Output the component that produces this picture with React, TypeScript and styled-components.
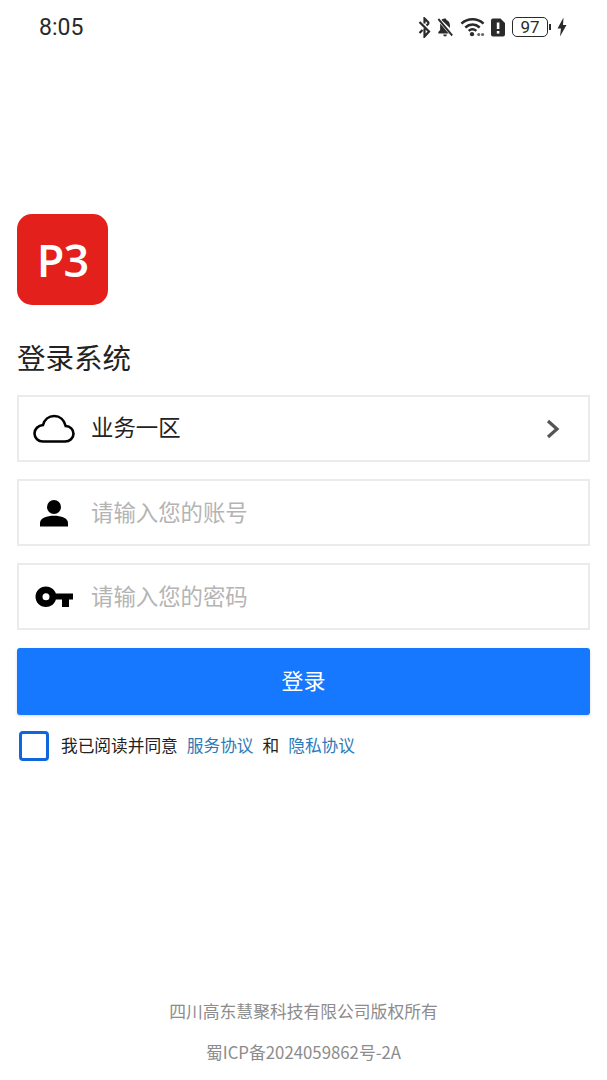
import styled, { createGlobalStyle } from 'styled-components'

const GlobalStyle = createGlobalStyle`
  html, body {
    margin: 0;
    padding: 0;
    background: #fff;
  }
  * {
    box-sizing: border-box;
  }
`

const BluetoothOffIcon = () => (
  <svg width="13" height="21" viewBox="0 0 13 21" fill="none" stroke="#2a2a2a" strokeWidth="2.2">
    <path d="M1.500 5 11 14.500l-4.500 5V11.500M11 6 8.500 8.500M6.500 6.500V1.500L11 6M1.500 16l3-3" />
  </svg>
)

const BellOffIcon = () => (
  <svg width="17" height="21" viewBox="0 0 19 21" fill="#2a2a2a" preserveAspectRatio="none">
    <path d="M9 1.500c.9 0 1.500.6 1.500 1.400 2.600.7 4 2.900 4 5.600v2.600L5 2.900c.8-.6 1.500-1 2.600-1.100C7.600 1.500 8.100 1.500 9 1.500zM3.500 6.500l9.500 10H1.500v-1.600l2-2V8.500c0-.7 0-1.400 0-2zM7 17.500h4c0 1.200-.9 2-2 2s-2-.8-2-2z" />
    <path d="M1.500 2 17 18.500" stroke="#2a2a2a" strokeWidth="2" fill="none" />
  </svg>
)

const WifiIcon = () => (
  <svg width="25" height="20" viewBox="0 0 26 20" fill="none" stroke="#2a2a2a" strokeWidth="2.600">
    <path d="M1.500 6.500C8 .5 18 .5 24.500 6.500M5.500 10.500c4.500-4 10.500-4 15 0M9 14c2.400-2 5.600-2 8 0" />
    <circle cx="12.500" cy="17.500" r="2.200" fill="#2a2a2a" stroke="none" />
    <circle cx="19.500" cy="17.800" r="1.600" fill="#666" stroke="none" />
    <circle cx="23.500" cy="17.800" r="1.600" fill="#666" stroke="none" />
  </svg>
)

const SimAlertIcon = () => (
  <svg width="14" height="19" viewBox="0 0 14 19">
    <path d="M3 .5h6.500L14 5v11.500a2 2 0 0 1-2 2H2a2 2 0 0 1-2-2v-14a2 2 0 0 1 2-2z" fill="#2a2a2a" />
    <rect x="5.800" y="4.500" width="2.600" height="6.500" fill="#fff" />
    <rect x="5.800" y="13" width="2.600" height="2.600" fill="#fff" />
  </svg>
)

const BoltIcon = () => (
  <svg width="10" height="20" viewBox="0 0 10 19" fill="#2a2a2a">
    <path d="M6.500 0 .5 11h3.500L3 19l6.500-11.500H6z" />
  </svg>
)

const CloudIcon = () => (
  <svg width="42" height="30" viewBox="0 0 42 30" fill="none" stroke="#000" strokeWidth="2.600">
    <path d="M10 27.500h22c4.800 0 8.500-3.400 8.500-7.800 0-4.300-3.300-7.500-7.800-7.700C31.200 6 26.700 2 21.200 2c-5.400 0-9.800 3.700-11.200 9C5 11.400 1.500 15 1.500 19.500c0 4.500 3.700 8 8.500 8z" />
  </svg>
)

const PersonIcon = () => (
  <svg width="28" height="28" viewBox="0 0 28 28" fill="#000">
    <circle cx="14" cy="8" r="7" />
    <path d="M0 27.500v-3.300C0 19 7 16.800 14 16.800s14 2.200 14 7.400v3.300z" />
  </svg>
)

const KeyIcon = () => (
  <svg width="38" height="22" viewBox="0 0 38 22" fill="#000">
    <path
      fillRule="evenodd"
      d="M11 .500c4.600 0 8.500 2.900 9.900 7H38v6h-4v7.500h-7v-7.500h-6.100c-1.400 4.600-5.300 7.500-9.900 7.500C5 21 .500 16.400.500 10.800.500 5.100 5 .500 11 .500zm0 6.800a3.500 3.500 0 1 0 0 7 3.500 3.500 0 0 0 0-7z"
    />
  </svg>
)

const ChevronIcon = () => (
  <svg width="14" height="20" viewBox="0 0 14 20" fill="none" stroke="#555" strokeWidth="3.200">
    <path d="M2 2l9 8-9 8" />
  </svg>
)

export default function App() {
  return (
    <Page>
      <GlobalStyle />
      <StatusBar>
        <Clock>8:05</Clock>
        <StatusIcons>
          <BluetoothOffIcon />
          <BellOffIcon />
          <WifiIcon />
          <SimAlertIcon />
          <Battery>
            <BatteryBody>97</BatteryBody>
            <BatteryCap />
          </Battery>
          <BoltIcon />
        </StatusIcons>
      </StatusBar>

      <Main>
        <Logo>P3</Logo>
        <Title>登录系统</Title>
        <Field>
          <IconSlot>
            <CloudIcon />
          </IconSlot>
          <FieldValue>业务一区</FieldValue>
          <ChevronIcon />
        </Field>
        <Field>
          <IconSlot>
            <PersonIcon />
          </IconSlot>
          <Placeholder>请输入您的账号</Placeholder>
        </Field>
        <Field>
          <IconSlot>
            <KeyIcon />
          </IconSlot>
          <Placeholder>请输入您的密码</Placeholder>
        </Field>
        <LoginButton>登录</LoginButton>
        <Agreement>
          <Checkbox />
          <AgreementText>我已阅读并同意</AgreementText>
          <AgreementLink>服务协议</AgreementLink>
          <AgreementText>和</AgreementText>
          <AgreementLink>隐私协议</AgreementLink>
        </Agreement>
      </Main>

      <Footer>
        <FooterLine>四川高东慧聚科技有限公司版权所有</FooterLine>
        <FooterLine>蜀ICP备2024059862号-2A</FooterLine>
      </Footer>
    </Page>
  )
}

const fontStack = `"Noto Sans CJK SC", "Noto Sans", "Liberation Sans", sans-serif`

const Page = styled.div`
  display: flex;
  flex-direction: column;
  width: 607px;
  height: 1080px;
  overflow: hidden;
  background: #fff;
  font-family: ${fontStack};
`

const StatusBar = styled.div`
  display: flex;
  align-items: center;
  justify-content: space-between;
  height: 54px;
  padding: 0 40px 0 39px;
  flex: none;
`

const Clock = styled.span`
  font-family: Roboto, sans-serif;
  font-size: 23px;
  color: #2a2a2a;
`

const StatusIcons = styled.div`
  display: flex;
  align-items: center;
  gap: 6px;
`

const Battery = styled.div`
  display: flex;
  align-items: center;
  gap: 1px;
  margin-left: 1px;
`

const BatteryBody = styled.div`
  display: flex;
  align-items: center;
  justify-content: center;
  width: 36px;
  height: 20px;
  border: 1.5px solid #2a2a2a;
  border-radius: 5px;
  font-family: Roboto, sans-serif;
  font-size: 17px;
  color: #2a2a2a;
`

const BatteryCap = styled.div`
  width: 2px;
  height: 6px;
  background: #2a2a2a;
`

const Main = styled.main`
  display: flex;
  flex-direction: column;
  padding: 160px 17px 0;
`

const Logo = styled.div`
  display: flex;
  align-items: center;
  justify-content: center;
  width: 91px;
  height: 91px;
  border-radius: 15px;
  background: #e3201b;
  font-family: "Open Sans", sans-serif;
  font-size: 45px;
  font-weight: 600;
  letter-spacing: -1px;
  color: #fff;
`

const Title = styled.h1`
  margin: 32px 0 18px;
  font-size: 28.500px;
  line-height: 40px;
  font-weight: 400;
  color: #222;
`

const Field = styled.div`
  display: flex;
  align-items: center;
  height: 67px;
  margin-bottom: 17px;
  padding-right: 28px;
  border: 2px solid #ebebeb;
  background: #fff;
`

const IconSlot = styled.div`
  display: flex;
  align-items: center;
  justify-content: center;
  width: 69px;
  margin-right: 3px;
  flex: none;
`

const FieldValue = styled.span`
  flex: 1;
  padding-bottom: 5px;
  font-size: 22.400px;
  color: #222;
`

const Placeholder = styled.span`
  flex: 1;
  padding-bottom: 3px;
  font-size: 22.400px;
  color: #b4b4b4;
`

const LoginButton = styled.button`
  height: 67px;
  margin-top: 1px;
  padding: 0 0 6px;
  border: none;
  border-radius: 3px;
  background: #1677ff;
  box-shadow: 0 1px 3px rgba(0, 0, 0, 0.15);
  font-family: ${fontStack};
  font-size: 22px;
  color: #fff;
`

const Agreement = styled.div`
  display: flex;
  align-items: center;
  gap: 9px;
  margin-top: 16px;
  padding-left: 2px;
`

const Checkbox = styled.div`
  width: 30px;
  height: 30px;
  margin-right: 3px;
  border: 3px solid #1266dc;
  border-radius: 4px;
`

const AgreementText = styled.span`
  padding-bottom: 2px;
  font-size: 16.700px;
  color: #222;
`

const AgreementLink = styled.span`
  padding-bottom: 2px;
  font-size: 16.700px;
  color: #2d7ab8;
`

const Footer = styled.footer`
  display: flex;
  flex-direction: column;
  align-items: center;
  gap: 17px;
  margin-top: auto;
  padding-bottom: 16px;
`

const FooterLine = styled.div`
  font-size: 16.800px;
  line-height: 24px;
  color: #8c8c8c;
`
